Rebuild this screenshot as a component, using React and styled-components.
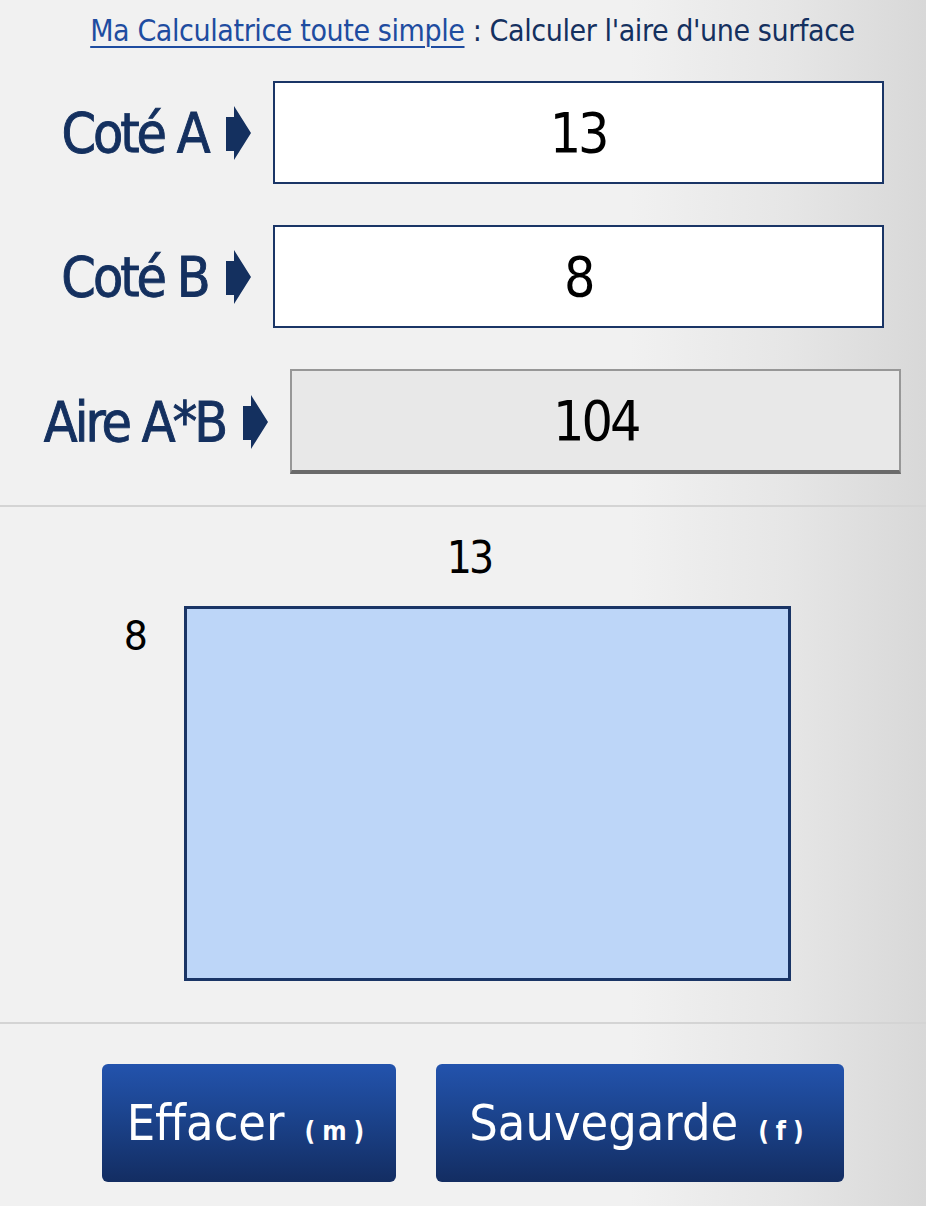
import React from "react";
import styled, { createGlobalStyle } from "styled-components";

const FONT = `"DejaVu Sans Condensed", "DejaVu Sans", sans-serif`;

const GlobalStyle = createGlobalStyle`
  html, body { margin: 0; padding: 0; }
  body {
    font-family: ${FONT};
    background: linear-gradient(to right, #f1f1f1 0%, #f1f1f1 68%, #e6e6e6 85%, #d8d8d8 100%);
    min-height: 100vh;
  }
`;

const Page = styled.div`
  display: flex;
  flex-direction: column;
  width: 926px;
  min-height: 1206px;
`;

const Header = styled.h1`
  margin: 0;
  padding: 10px 0 0 19px;
  height: 42px;
  line-height: 42px;
  text-align: center;
  font-family: ${FONT};
  font-weight: normal;
  font-size: 30px;
  letter-spacing: -0.4px;
  color: #14305f;
  white-space: nowrap;
`;

const TitleLink = styled.a`
  color: #1e4ca0;
  text-decoration: underline;
  text-decoration-thickness: 2px;
  text-underline-offset: 5px;
`;

const Form = styled.div`
  display: flex;
  flex-direction: column;
  gap: 41px;
  padding: 29px 0 0 19px;
`;

const Row = styled.div`
  display: flex;
  align-items: center;
  justify-content: center;
`;

const Label = styled.span`
  font-family: ${FONT};
  font-weight: normal;
  font-size: 55px;
  letter-spacing: -3px;
  color: #14305f;
  white-space: nowrap;
  margin-right: 18px;
  -webkit-text-stroke: 0.9px #14305f;
`;

const Arrow = styled.svg`
  width: 25px;
  height: 54px;
  flex: none;
  margin-right: 22px;
`;

const Field = styled.div`
  box-sizing: border-box;
  width: 611px;
  height: ${(p) => (p.$result ? "105px" : "103px")};
  display: flex;
  align-items: center;
  justify-content: center;
  background: ${(p) => (p.$result ? "#e8e8e8" : "#ffffff")};
  border: 2px solid ${(p) => (p.$result ? "#979797" : "#1a3566")};
  border-bottom: ${(p) => (p.$result ? "4px solid #6a6a6a" : "2px solid #1a3566")};
  font-family: ${FONT};
  font-size: 55px;
  letter-spacing: -3px;
  color: #000;
`;

const Separator = styled.hr`
  margin: 0;
  border: none;
  height: 2px;
  background: #d4d4d4;
  width: 100%;
`;

const Spacer = styled.div`
  height: ${(p) => p.$h}px;
`;

const Drawing = styled.div`
  display: flex;
  flex-direction: column;
  padding: 28px 0 41px;
`;

const TopDim = styled.div`
  text-align: center;
  padding-left: 12px;
  font-family: ${FONT};
  font-size: 44px;
  letter-spacing: -3px;
  line-height: 46px;
  height: 46px;
  color: #000;
  margin-bottom: 25px;
`;

const DrawRow = styled.div`
  display: flex;
  align-items: flex-start;
  padding-left: 124px;
`;

const SideDim = styled.div`
  width: 60px;
  font-family: Roboto, "DejaVu Sans", sans-serif;
  font-size: 42px;
  line-height: 60px;
  color: #000;
`;

const Rect = styled.div`
  box-sizing: border-box;
  border: 3px solid #1a3566;
  background: #bdd6f8;
`;

const Buttons = styled.div`
  display: flex;
  justify-content: center;
  gap: 40px;
  padding: 40px 0 0 20px;
`;

const Button = styled.button`
  box-sizing: border-box;
  width: ${(p) => p.$w}px;
  height: 118px;
  border: none;
  border-radius: 6px;
  background: linear-gradient(to bottom, #2353ad 0%, #1c4590 40%, #132d62 100%);
  color: #fff;
  font-family: ${FONT};
  font-size: 50px;
  display: flex;
  align-items: center;
  justify-content: center;
  padding: 0;
  cursor: pointer;
`;

const Caption = styled.span`
  white-space: nowrap;
`;

const Key = styled.span`
  font-size: 26px;
  letter-spacing: 7px;
  font-weight: bold;
  margin-left: 20px;
`;

function ArrowIcon() {
  return (
    <Arrow viewBox="0 0 25 54">
      <polygon points="0,11 8,11 8,0 25,27 8,54 8,45 0,45" fill="#14305f" />
    </Arrow>
  );
}

function Line({ label, children, result }) {
  return (
    <Row>
      <Label>{label}</Label>
      <ArrowIcon />
      <Field $result={result}>{children}</Field>
    </Row>
  );
}

export default function App() {
  const a = 13;
  const b = 8;
  const scale = 607 / a;
  return (
    <Page>
      <GlobalStyle />
      <Header>
        <TitleLink href="#">Ma Calculatrice toute simple</TitleLink> : Calculer l'aire d'une surface
      </Header>
      <Form>
        <Line label="Coté A">{a}</Line>
        <Line label="Coté B">{b}</Line>
        <Line label="Aire A*B" result>
          {a * b}
        </Line>
      </Form>
      <Spacer $h={31} />
      <Separator />
      <Drawing>
        <TopDim>{a}</TopDim>
        <DrawRow>
          <SideDim>{b}</SideDim>
          <Rect style={{ width: a * scale, height: b * scale * (375 / 373.5) }} />
        </DrawRow>
      </Drawing>
      <Separator />
      <Buttons>
        <Button $w={294}>
          <Caption>
            Effacer<Key>(m)</Key>
          </Caption>
        </Button>
        <Button $w={408}>
          <Caption>
            Sauvegarde<Key>(f)</Key>
          </Caption>
        </Button>
      </Buttons>
    </Page>
  );
}
